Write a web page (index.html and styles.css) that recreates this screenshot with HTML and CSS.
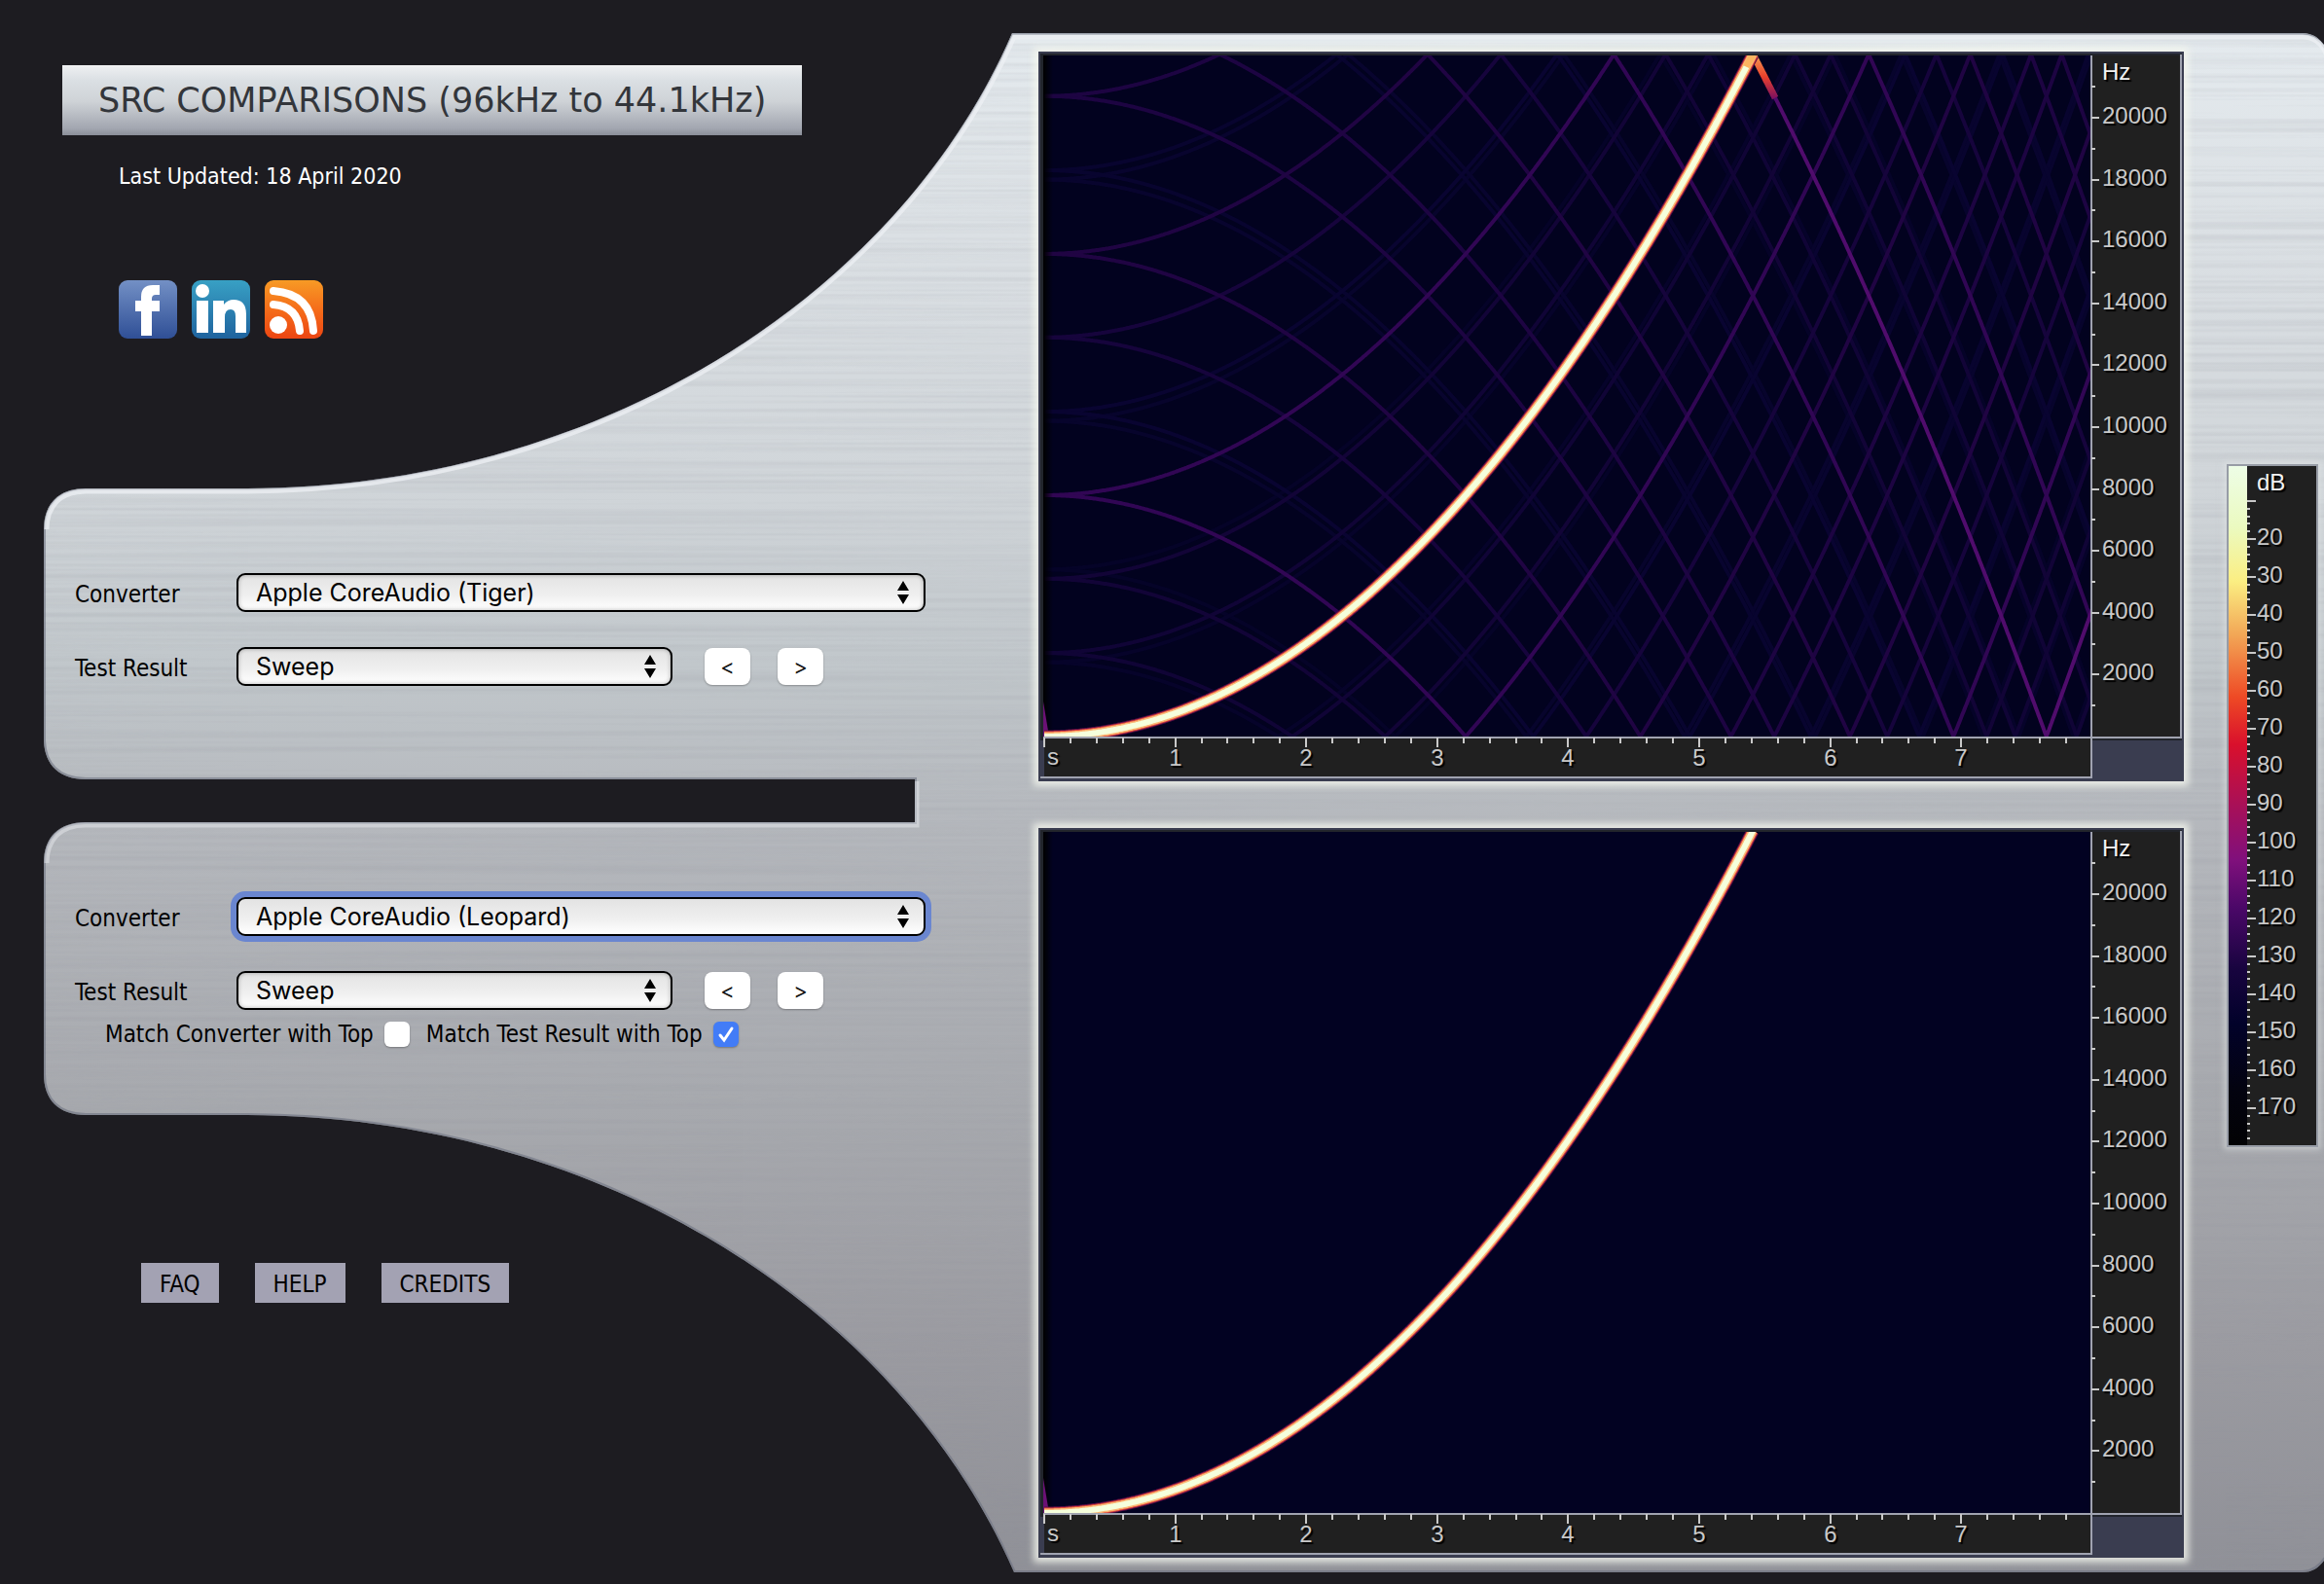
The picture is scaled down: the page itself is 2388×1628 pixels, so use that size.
FILE: index.html
```html
<!DOCTYPE html>
<html lang="en">
<head>
  <meta charset="UTF-8">
  <meta name="viewport" content="width=device-width, initial-scale=1.0">
  <title>SRC Comparisons</title>
  <link rel="stylesheet" href="styles.css">
</head>
<body>
  <!-- brushed metal plate behind everything -->
  <svg class="plate" viewBox="0 0 2388 1628" preserveAspectRatio="none" aria-hidden="true">
    <defs>
      <linearGradient id="metal" x1="0" y1="0" x2="0" y2="1628" gradientUnits="userSpaceOnUse">
        <stop offset="0" stop-color="#e6ecf0"/>
        <stop offset="0.15" stop-color="#dbe0e4"/>
        <stop offset="0.31" stop-color="#d0d5d9"/>
        <stop offset="0.42" stop-color="#c1c7cb"/>
        <stop offset="0.52" stop-color="#b5b8bd"/>
        <stop offset="0.7" stop-color="#a7a9ae"/>
        <stop offset="0.85" stop-color="#9b9ba1"/>
        <stop offset="1" stop-color="#8f9097"/>
      </linearGradient>
      <filter id="brush" x="0" y="0" width="100%" height="100%">
        <feTurbulence type="fractalNoise" baseFrequency="0.001 0.2" numOctaves="2" seed="4"/>
        <feColorMatrix type="matrix" values="0 0 0 0 0.3  0 0 0 0 0.31  0 0 0 0 0.35  1 0 0 0 -0.4"/>
      </filter>
      <clipPath id="plateShape">
        <path id="outline" d="M1040 34 H2366 C2380 34 2388 44 2394 56 V1594 C2388 1606 2380 1616 2366 1616 H1042 C924 1346 619 1146 250 1146 H88 C60 1146 45 1130 45 1104 V887 C45 861 60 845 88 845 H940 V801 H88 C60 801 45 785 45 759 V544 C45 518 60 502 88 502 H250 C619 502 924 301 1040 34 Z"/>
      </clipPath>
    </defs>
    <g clip-path="url(#plateShape)">
      <rect width="2388" height="1628" fill="url(#metal)"/>
      <rect width="2388" height="1628" filter="url(#brush)" opacity="0.4"/>
      <use href="#outline" fill="none" stroke="#6d7280" stroke-width="4" opacity="0.6"/>
      <g class="shine">
        <path d="M48 544 C48 520 62 505 88 505 H250 C619 505 924 304 1042 38 H2366 C2380 38 2388 48 2392 60"/>
        <path class="soft" d="M48 887 C48 863 62 848 88 848 H942 V803"/>
      </g>
    </g>
  </svg>

  <main class="page">
    <section class="side">
      <h1 class="title">SRC COMPARISONS (96kHz to 44.1kHz)</h1>
      <p class="updated">Last Updated: 18 April 2020</p>

      <div class="social">
        <a href="#" aria-label="Facebook">
          <svg viewBox="0 0 60 60">
            <defs><linearGradient id="fb" x1="0" y1="0" x2="0" y2="1"><stop offset="0" stop-color="#7390c5"/><stop offset="1" stop-color="#2f4f96"/></linearGradient></defs>
            <rect width="60" height="60" rx="9" fill="url(#fb)"/>
            <path fill="#fff" d="M23 57V32H17V21H23V17Q23 5 35 5H42V15H38Q34 15 34 19V21H42V32H34V57Z"/>
          </svg>
        </a>
        <a href="#" aria-label="LinkedIn">
          <svg viewBox="0 0 60 60">
            <defs><linearGradient id="li" x1="0" y1="0" x2="0" y2="1"><stop offset="0" stop-color="#38a0c4"/><stop offset="1" stop-color="#1f639e"/></linearGradient></defs>
            <rect width="60" height="60" rx="9" fill="url(#li)"/>
            <circle cx="11" cy="11" r="7" fill="#fff"/>
            <path fill="#fff" d="M5 21H17V54H5ZM22 21H33V25Q37 20 43 20Q56 20 56 35V54H45V37Q45 30 40 30Q34 30 34 38V54H22Z"/>
          </svg>
        </a>
        <a href="#" aria-label="RSS feed">
          <svg viewBox="0 0 60 60">
            <defs><linearGradient id="rss" x1="0" y1="0" x2="0" y2="1"><stop offset="0" stop-color="#f79a25"/><stop offset="0.5" stop-color="#f56d1a"/><stop offset="1" stop-color="#ec4512"/></linearGradient></defs>
            <rect width="60" height="60" rx="9" fill="url(#rss)"/>
            <circle cx="14" cy="46" r="9" fill="#fff"/>
            <path fill="none" stroke="#fff" stroke-width="8" stroke-linecap="round" d="M9 25Q34 27 36 52M9 11Q48 14 50 52"/>
          </svg>
        </a>
      </div>

      <form class="panel">
        <div class="row">
          <label for="converter1">Converter</label>
          <select id="converter1" class="wide"><option>Apple CoreAudio (Tiger)</option></select>
        </div>
        <div class="row">
          <label for="test1">Test Result</label>
          <select id="test1"><option>Sweep</option></select>
          <button type="button" aria-label="Previous test">&lt;</button>
          <button type="button" aria-label="Next test">&gt;</button>
        </div>
      </form>

      <form class="panel lower">
        <div class="row">
          <label for="converter2">Converter</label>
          <select id="converter2" class="wide active"><option>Apple CoreAudio (Leopard)</option></select>
        </div>
        <div class="row">
          <label for="test2">Test Result</label>
          <select id="test2"><option>Sweep</option></select>
          <button type="button" aria-label="Previous test">&lt;</button>
          <button type="button" aria-label="Next test">&gt;</button>
        </div>
        <div class="match">
          <label for="matchConverter">Match Converter with Top</label>
          <input type="checkbox" id="matchConverter">
          <label for="matchTest">Match Test Result with Top</label>
          <input type="checkbox" id="matchTest" checked>
        </div>
      </form>

      <nav class="links">
        <a href="#">FAQ</a>
        <a href="#">HELP</a>
        <a href="#">CREDITS</a>
      </nav>
    </section>

    <section class="plots">
      <svg class="plot" id="plotTop" viewBox="0 0 1177 750" role="img" aria-label="Sweep, Apple CoreAudio (Tiger)"></svg>
      <svg class="plot" id="plotBottom" viewBox="0 0 1177 750" role="img" aria-label="Sweep, Apple CoreAudio (Leopard)"></svg>
    </section>

    <svg class="scale" id="scale" viewBox="0 0 94 702" role="img" aria-label="Level in dB"></svg>
  </main>

  <script src="script.js"></script>
</body>
</html>
```
FILE: styles.css
```css
* {
  box-sizing: border-box;
}
body {
  margin: 0;
  background-color: #1d1c21;
  font-family: "DejaVu Sans Condensed", "DejaVu Sans", Tahoma, sans-serif;
  font-size: 24px;
  line-height: 32px;
  color: #000;
  position: relative;
}
.plate {
  position: absolute;
  top: 0;
  left: 0;
  width: 100%;
  height: 100%;
}
.shine path {
  fill: none;
  stroke: #eef0f4;
  stroke-width: 5;
  opacity: 0.75;
}
.shine path.soft {
  opacity: 0.45;
}
.page {
  position: relative;
  display: grid;
  grid-template-columns: minmax(0, 1067fr) minmax(0, 1221fr) 94px;
  align-items: start;
  min-height: 100vh;
  padding-right: 6px;
}

/* left column */
.side {
  padding: 67px 0 0 64px;
}
.title {
  display: inline-block;
  margin: 0;
  padding: 0 37px 2px;
  font-family: "DejaVu Sans", sans-serif;
  font-size: 35px;
  font-weight: normal;
  line-height: 68px;
  color: #33363b;
  white-space: nowrap;
  background: linear-gradient(#eceef0, #dadfe3 20%, #cfd3d7 50%, #a2a6b0 90%, #8a8e98);
  border-top: 2px solid #eff0f2;
}
.updated {
  margin: 26px 0 0 58px;
  font-size: 23px;
  color: #fff;
}
.social {
  display: flex;
  gap: 15px;
  margin: 91px 0 0 58px;
}
.social a,
.social svg {
  display: block;
  width: 60px;
  height: 60px;
}
.panel {
  display: flex;
  flex-direction: column;
  gap: 36px;
  margin: 241px 0 0 13px;
}
.panel.lower {
  margin-top: 217px;
}
.row {
  display: flex;
  align-items: center;
  height: 40px;
}
.row label {
  width: 166px;
  padding-top: 4px;
}
select {
  appearance: none;
  width: 448px;
  height: 40px;
  margin: 0 5px 0 0;
  padding: 0 40px 0 18px;
  font-family: Inter, sans-serif;
  font-size: 25px;
  color: #000;
  border: 2px solid #000;
  border-radius: 9px;
  background: url("data:image/svg+xml,%3Csvg xmlns='http://www.w3.org/2000/svg' width='14' height='24'%3E%3Cpath d='M7 0L13 10H1ZM7 24L13 14H1Z'/%3E%3C/svg%3E") no-repeat right 14px center, linear-gradient(#e3e3e3, #f0f0f0 60%, #fff);
  box-shadow: inset 0 0 4px rgba(0, 0, 0, 0.3);
}
select.wide {
  width: 708px;
}
select.active {
  box-shadow: 0 0 0 6px #6a86d0;
}
button {
  width: 47px;
  height: 38px;
  margin-left: 28px;
  padding: 0;
  font-family: Inter, sans-serif;
  font-size: 22px;
  color: #111;
  background-color: #fff;
  border: none;
  border-radius: 8px;
  box-shadow: 0 1px 2px rgba(0, 0, 0, 0.3);
}
.match {
  display: flex;
  align-items: center;
  height: 32px;
  margin: -27px 0 0 31px;
}
.match input {
  appearance: none;
  width: 26px;
  height: 26px;
  margin: 0 17px 0 11px;
  background-color: #fff;
  border-radius: 6px;
  box-shadow: 0 1px 2px rgba(0, 0, 0, 0.3);
}
.match input:checked {
  background: #427cf7 url("data:image/svg+xml,%3Csvg xmlns='http://www.w3.org/2000/svg' width='26' height='26'%3E%3Cpath d='M7 14L11 19L19 7' fill='none' stroke='white' stroke-width='3' stroke-linecap='round'/%3E%3C/svg%3E") center;
}
.links {
  display: flex;
  gap: 37px;
  margin: 219px 0 0 81px;
}
.links a {
  padding: 6px 19px 3px;
  color: #000;
  text-decoration: none;
  background-color: #a3a2b3;
}

/* spectrograms */
.plots {
  display: flex;
  flex-direction: column;
  gap: 48px;
  padding: 53px 44px 27px 0;
}
.plot {
  display: block;
  width: 100%;
  box-shadow: 0 0 7px 5px rgba(244, 246, 238, 0.8);
}
.plot text,
.scale text {
  font-family: "Liberation Sans", Arial, sans-serif;
  font-size: 24px;
  fill: #c9c9c9;
  text-shadow: 2px 2px 1px #000;
}
.plot text.unit,
.scale text.unit {
  fill: #f2f2f2;
}
.scale {
  display: block;
  width: 94px;
  margin-top: 477px;
  box-shadow: 0 0 6px 3px rgba(225, 230, 230, 0.5);
}
```
FILE: script.js
```js
const NS = 'http://www.w3.org/2000/svg';
const SOURCE_RATE = 96000;
const TARGET_RATE = 44100;
const NYQUIST = TARGET_RATE / 2;
const PEAK_TIME = 5.41;

function add(parent, name, attrs, text) {
  const el = document.createElementNS(NS, name);
  for (const key in attrs) {
    el.setAttribute(key, attrs[key]);
  }
  if (text !== undefined) {
    el.textContent = text;
  }
  parent.appendChild(el);
  return el;
}

const timeX = t => 6 + t * 134.6;
const freqY = f => 704 - f * 0.0318;

// fold a frequency into 0..Nyquist
function fold(f) {
  const r = ((f % TARGET_RATE) + TARGET_RATE) % TARGET_RATE;
  return r > NYQUIST ? TARGET_RATE - r : r;
}

function sweepPath(offset, sign, from, to) {
  let d = '';
  for (let t = from; t <= to; t += 0.01) {
    const f = fold(offset + sign * NYQUIST * Math.pow(t / PEAK_TIME, 2));
    d += (d ? 'L' : 'M') + timeX(t).toFixed(1) + ' ' + freqY(f).toFixed(1);
  }
  return d;
}

function drawPlot(id, aliases) {
  const svg = document.getElementById(id);
  const defs = add(svg, 'defs', {});
  const clip = add(defs, 'clipPath', { id: id + 'Clip' });
  add(clip, 'rect', { x: 5, y: 4, width: 1076, height: 700 });
  const fade = add(defs, 'linearGradient', { id: id + 'Fade' });
  add(fade, 'stop', { offset: 0, 'stop-color': '#000' });
  add(fade, 'stop', { offset: 1, 'stop-color': '#000', 'stop-opacity': 0 });
  const hot = add(defs, 'linearGradient', { id: id + 'Hot', x1: 0, y1: 4, x2: 0, y2: 48, gradientUnits: 'userSpaceOnUse' });
  add(hot, 'stop', { offset: 0, 'stop-color': '#f79a50' });
  add(hot, 'stop', { offset: 0.5, 'stop-color': '#e8402c' });
  add(hot, 'stop', { offset: 1, 'stop-color': '#7c1060' });

  add(svg, 'rect', { width: 1177, height: 750, fill: '#3a3d50' });
  add(svg, 'rect', { x: 2, y: 2, width: 1173, height: 706, fill: '#22252c' });
  add(svg, 'rect', { x: 5, y: 4, width: 1076, height: 700, fill: aliases ? '#02021f' : '#020222' });

  const g = add(svg, 'g', { 'clip-path': 'url(#' + id + 'Clip)', fill: 'none', 'stroke-linejoin': 'round' });
  if (aliases) {
    const colors = ['#310654', '#200443', '#1d0442', '#16043c', '#120437', '#100436', '#090431', '#08042f', '#08042e', '#07042c', '#06032a', '#050328'];
    for (let n = colors.length; n >= 1; n--) {
      [1, -1].forEach(sign => {
        add(g, 'path', { d: sweepPath(n * SOURCE_RATE, sign, 0, 8), stroke: colors[n - 1], 'stroke-width': 4 });
      });
    }
    add(g, 'path', { d: sweepPath(0, 1, PEAK_TIME, 8), stroke: '#500c6c', 'stroke-width': 4 });
    add(g, 'path', { d: sweepPath(0, 1, PEAK_TIME, 5.58), stroke: 'url(#' + id + 'Hot)', 'stroke-width': 7 });
  }
  add(g, 'rect', { x: 5, y: 4, width: 10, height: 700, fill: 'url(#' + id + 'Fade)' });
  add(g, 'path', { d: 'M5 704V668L11 704Z', fill: '#6b1175' });

  const main = sweepPath(0, 1, 0, PEAK_TIME);
  [['#5a0e48', 13], ['#e0483c', 11], ['#fbb874', 9], ['#f5ffdc', 6]].forEach(s => {
    add(g, 'path', { d: main, stroke: s[0], 'stroke-width': s[1] });
  });
  if (aliases) {
    add(g, 'path', { d: sweepPath(0, 1, 5.36, PEAK_TIME), stroke: '#fbb560', 'stroke-width': 7 });
  }

  // frequency axis
  add(svg, 'rect', { x: 1081, y: 4, width: 92, height: 702, fill: '#202020' });
  add(svg, 'rect', { x: 6, y: 704, width: 1075, height: 42, fill: '#202020' });
  add(svg, 'path', {
    d: 'M1082 4V747M5 705H1175M1174 3V706M2 746H1083',
    stroke: '#a0a3b0', 'stroke-width': 2, fill: 'none'
  });
  add(svg, 'text', { x: 1093, y: 29, class: 'unit' }, 'Hz');
  for (let f = 1000; f <= 21000; f += 1000) {
    const y = Math.round(freqY(f));
    const major = f % 2000 === 0;
    add(svg, 'rect', { x: 1082, y: y - 1, width: major ? 8 : 4, height: 2, fill: '#c9c9c9' });
    if (major) {
      add(svg, 'text', { x: 1093, y: y + 6 }, f);
    }
  }

  // time axis
  add(svg, 'text', { x: 9, y: 733 }, 's');
  for (let i = 0; i < 40; i++) {
    const x = Math.round(timeX(i / 5));
    const major = i % 5 === 0;
    add(svg, 'rect', { x: x - 1, y: 705, width: 2, height: major ? 10 : 6, fill: '#c9c9c9' });
    if (major && i > 0) {
      add(svg, 'text', { x: x, y: 734, 'text-anchor': 'middle' }, i / 5);
    }
  }
}

function drawScale() {
  const svg = document.getElementById('scale');
  const grad = add(add(svg, 'defs', {}), 'linearGradient', { id: 'heat', x1: 0, y1: 0, x2: 0, y2: 1 });
  [
    [0, '#edfde6'], [0.09, '#ebfac0'], [0.17, '#fbee82'], [0.25, '#f2a555'],
    [0.34, '#ee4a25'], [0.41, '#d9102c'], [0.5, '#a81058'], [0.58, '#80107c'],
    [0.65, '#4b0868'], [0.74, '#18043f'], [0.82, '#02022a'], [0.92, '#03030f'], [1, '#020204']
  ].forEach(s => add(grad, 'stop', { offset: s[0], 'stop-color': s[1] }));

  add(svg, 'rect', { width: 94, height: 702, fill: '#979ca6' });
  add(svg, 'rect', { x: 2, y: 2, width: 90, height: 698, fill: '#202020' });
  add(svg, 'rect', { x: 2, y: 2, width: 19, height: 698, fill: 'url(#heat)' });
  add(svg, 'text', { x: 31, y: 27, class: 'unit' }, 'dB');
  for (let db = 10; db <= 178; db += 2) {
    const y = Math.round(38 + (db - 10) * 3.9);
    const major = db % 10 === 0;
    add(svg, 'rect', { x: 21, y: y - 1, width: major ? 9 : 3, height: 2, fill: '#c9c9c9' });
    if (major && db > 10) {
      add(svg, 'text', { x: 31, y: y + 6 }, db);
    }
  }
}

drawPlot('plotTop', true);
drawPlot('plotBottom', false);
drawScale();
```
